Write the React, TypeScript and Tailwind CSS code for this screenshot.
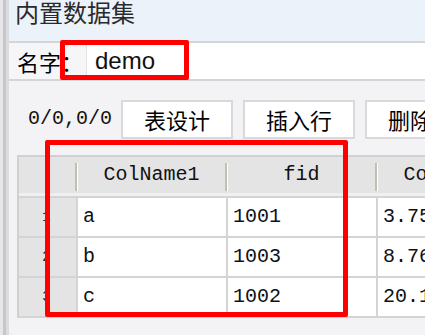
import React from 'react'

const cjk = "font-['Noto_Sans_CJK_SC',sans-serif]"
const mono = "font-['Liberation_Mono',monospace]"

const rows = [
  { n: 1, name: 'a', fid: '1001', v: '3.75' },
  { n: 2, name: 'b', fid: '1003', v: '8.76' },
  { n: 3, name: 'c', fid: '1002', v: '20.16' },
]

const cols = ['ColName1', 'fid', 'ColName2']

function HeaderCell({ label }: { label: string }) {
  return (
    <div className="w-[150px] shrink-0 flex items-start">
      <div className={`flex-1 h-[36px] flex items-center justify-center text-[20px] text-[#111] ${mono}`}>{label}</div>
      <div className="mt-[6px] h-[28px] w-[3px] flex">
        <div className="w-[2px] bg-[#c2beb4]" />
        <div className="w-[1px] bg-white" />
      </div>
    </div>
  )
}

export default function App() {
  return (
    <div className="relative w-[425px] h-[335px] overflow-hidden flex bg-[#f3f3f5]">
      {/* left strip */}
      <div className="w-[9px] shrink-0 flex">
        <div className="w-[3px] bg-[#e6e6e9]" />
        <div className="w-[3px] bg-[#c6c6cb]" />
        <div className="w-[3px] bg-[#dcdce0]" />
      </div>

      <div className="flex-1 flex flex-col min-w-0">
        {/* title */}
        <div className={`h-[41px] bg-[#ebf2fa] pl-[6px] text-[24px] leading-[24px] text-[#2a2a2a] ${cjk}`}>
          内置数据集
        </div>
        <div className="h-[2px] bg-[#d5d5d7]" />

        {/* name row */}
        <div className="h-[36px] flex">
          <div className={`w-[77px] shrink-0 pl-[8px] flex items-center text-[22px] text-black bg-[#f6f6f8] ${cjk}`}>
            名字：
          </div>
          <div className="flex-1 bg-white border-l border-[#e2e2e2] pl-[8px] flex items-center text-[24px] text-[#111] font-['Liberation_Sans',sans-serif]">
            demo
          </div>
        </div>
        <div className="h-[2px] bg-[#d5d5d7]" />

        {/* toolbar */}
        <div className="h-[74px] flex items-center pl-[19px] pt-[2px]">
          <span className={`text-[20px] text-[#111] ${mono}`}>0/0,0/0</span>
          <div className="ml-[9px] flex gap-[10px]">
            {['表设计', '插入行', '删除行'].map((b) => (
              <div
                key={b}
                className={`w-[112px] h-[39px] shrink-0 bg-white border-2 border-[#d9d9db] flex items-center justify-center text-[22px] text-black ${cjk}`}
              >
                {b}
              </div>
            ))}
          </div>
        </div>

        {/* table */}
        <div className="ml-[8px] border-t-2 border-l-2 border-[#d0d0d2] flex flex-col">
          <div className="flex bg-[#e4e4e4]">
            <div className="w-[59px] shrink-0 flex items-start justify-end">
              <div className="mt-[6px] h-[28px] w-[3px] flex">
                <div className="w-[2px] bg-[#c2beb4]" />
                <div className="w-[1px] bg-white" />
              </div>
            </div>
            {cols.map((c) => (
              <HeaderCell key={c} label={c} />
            ))}
          </div>
          <div className="h-[3px] bg-[#f0f0f0]" />
          <div className="h-[2px] bg-[#d4d4d4]" />
          {rows.map((r) => (
            <div key={r.n} className="flex h-[40px] border-b-2 border-[#d4d4d4]">
              <div className={`w-[59px] shrink-0 bg-[#e4e4e4] border-r-2 border-[#d4d4d4] flex items-center justify-center pr-[2px] text-[14px] text-[#222] ${mono}`}>
                {r.n}
              </div>
              {[r.name, r.fid, r.v].map((v, i) => (
                <div
                  key={i}
                  className={`w-[150px] shrink-0 bg-white border-r-2 border-[#d4d4d4] pl-[5px] flex items-center text-[20px] text-[#111] ${mono}`}
                >
                  {v}
                </div>
              ))}
            </div>
          ))}
        </div>
      </div>

      {/* red annotation boxes */}
      <div className="absolute left-[60px] top-[40px] w-[129px] h-[40px] border-[5px] border-[#ff0000] rounded-[2px]" />
      <div className="absolute left-[45px] top-[140px] w-[303px] h-[177px] border-[5px] border-[#ff0000] rounded-[2px]" />
    </div>
  )
}
